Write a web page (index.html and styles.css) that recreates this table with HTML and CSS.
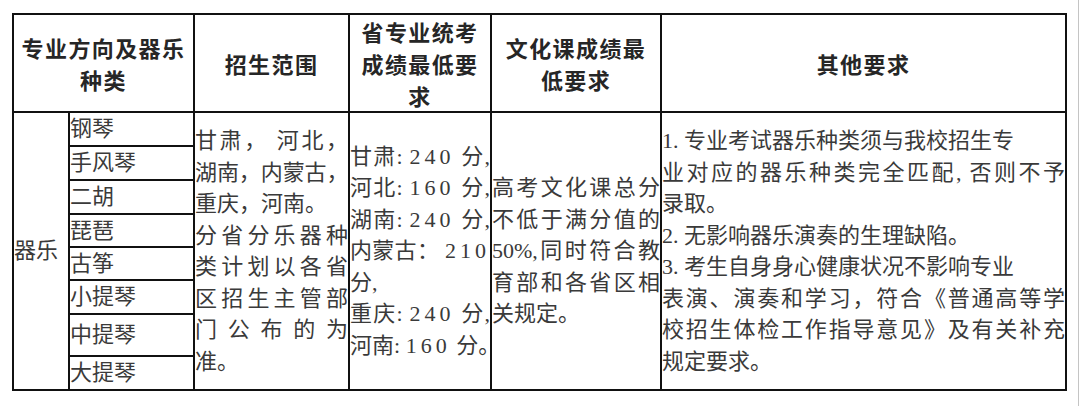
FILE: index.html
```html
<!DOCTYPE html>
<html lang="zh-CN">
<head>
<meta charset="utf-8">
<title>专业方向及器乐种类</title>
<link rel="stylesheet" href="styles.css">
</head>
<body>
<div class="page">
  <table class="grid">
    <colgroup>
      <col class="c0"><col class="c1"><col class="c2"><col class="c3"><col class="c4"><col class="c5">
    </colgroup>
    <thead>
      <tr class="hrow">
        <th colspan="2">专业方向及器乐<br>种类</th>
        <th>招生范围</th>
        <th>省专业统考<br>成绩最低要<br>求</th>
        <th>文化课成绩最<br>低要求</th>
        <th>其他要求</th>
      </tr>
    </thead>
    <tbody>
      <tr class="r34">
        <td rowspan="8" class="cat">器乐</td>
        <td class="inst">钢琴</td>
        <td rowspan="8" class="txt">
          <div class="j">甘肃， 河北，</div>
          <div class="j tight">湖南，内蒙古，</div>
          <div>重庆，河南。</div>
          <div class="j">分省分乐器种</div>
          <div class="j">类计划以各省</div>
          <div class="j">区招生主管部</div>
          <div class="j">门公布的为</div>
          <div>准。</div>
        </td>
        <td rowspan="8" class="txt">
          <div class="j">甘肃: <span class="num">240</span> 分,</div>
          <div class="j">河北: <span class="num">160</span> 分,</div>
          <div class="j">湖南: <span class="num">240</span> 分,</div>
          <div class="j">内蒙古： <span class="num">210</span></div>
          <div>分,</div>
          <div class="j">重庆: <span class="num">240</span> 分,</div>
          <div class="j">河南: <span class="num">160</span> 分。</div>
        </td>
        <td rowspan="8" class="txt">
          <div class="j">高考文化课总分</div>
          <div class="j">不低于满分值的</div>
          <div class="j">50%,同时符合教</div>
          <div class="j">育部和各省区相</div>
          <div>关规定。</div>
        </td>
        <td rowspan="8" class="txt">
          <div>1. 专业考试器乐种类须与我校招生专</div>
          <div class="j">业对应的器乐种类完全匹配, 否则不予</div>
          <div>录取。</div>
          <div>2. 无影响器乐演奏的生理缺陷。</div>
          <div>3. 考生自身身心健康状况不影响专业</div>
          <div class="j">表演、演奏和学习，符合《普通高等学</div>
          <div class="j">校招生体检工作指导意见》及有关补充</div>
          <div>规定要求。</div>
        </td>
      </tr>
      <tr class="r34"><td class="inst">手风琴</td></tr>
      <tr class="r34"><td class="inst">二胡</td></tr>
      <tr class="r33"><td class="inst">琵琶</td></tr>
      <tr class="r33"><td class="inst">古筝</td></tr>
      <tr class="r34"><td class="inst">小提琴</td></tr>
      <tr class="r42"><td class="inst">中提琴</td></tr>
      <tr class="r34"><td class="inst">大提琴</td></tr>
    </tbody>
  </table>
</div>
</body>
</html>
```
FILE: styles.css
```css
html, body {
  margin: 0;
  padding: 0;
  background: #ffffff;
}

.page {
  width: 1079px;
  height: 406px;
  box-sizing: border-box;
  border-right: 1px solid #c4c4c4;
  padding: 13px 0 0 12px;
}

.grid {
  border-collapse: collapse;
  table-layout: fixed;
  width: 1055px;
  border: 2px solid #111111;
  font-family: "Liberation Serif", "Noto Sans CJK SC", serif;
  font-size: 22px;
  line-height: 31.5px;
  color: #3a3a3a;
}

.c0 { width: 56px; }
.c1 { width: 125px; }
.c2 { width: 155px; }
.c3 { width: 142px; }
.c4 { width: 170px; }
.c5 { width: 405px; }

.grid th,
.grid td {
  border: 2px solid #111111;
  padding: 0;
  vertical-align: middle;
}

.grid th {
  font-family: "Noto Sans CJK SC", sans-serif;
  font-weight: 700;
  font-size: 22px;
  line-height: 32px;
  letter-spacing: 1.4px;
  color: #262626;
  text-align: center;
}

.hrow { height: 96px; }
.r33 { height: 33px; }
.r34 { height: 34px; }
.r42 { height: 42px; }

.cat {
  padding-left: 1px;
  text-align: left;
}

.inst {
  padding-left: 2px;
  line-height: 28px;
}

.txt {
  padding: 0 2px 0 1px;
  white-space: nowrap;
}

.j {
  text-align: justify;
  text-align-last: justify;
}

.tight {
  letter-spacing: -0.5px;
}

.num {
  letter-spacing: 4px;
}
```
